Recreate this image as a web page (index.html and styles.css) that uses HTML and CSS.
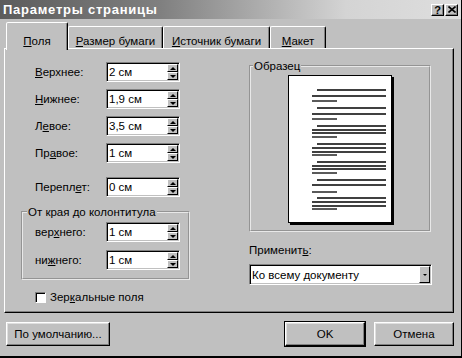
FILE: index.html
```html
<!DOCTYPE html>
<html lang="ru">
<head>
<meta charset="utf-8">
<title>Параметры страницы</title>
<link rel="stylesheet" href="styles.css">
</head>
<body>
<div class="dialog">

    <div class="titlebar">
        <span class="title">Параметры страницы</span>
        <div class="title-buttons">
            <span class="title-btn">?</span>
            <span class="title-btn">
                <svg width="8" height="7" viewBox="0 0 8 7"><path d="M0.5 0.5 L7.5 6.5 M7.5 0.5 L0.5 6.5" stroke="#000" stroke-width="1.6"/></svg>
            </span>
        </div>
    </div>

    <div class="tabs">
        <div class="tab active"><u>П</u>оля</div>
        <div class="tab tab-size"><u>Р</u>азмер бумаги</div>
        <div class="tab tab-source"><u>И</u>сточник бумаги</div>
        <div class="tab tab-layout"><u>М</u>акет</div>
    </div>

    <div class="panel">
        <div class="col-left">
            <div class="field-row">
                <label><u>В</u>ерхнее:</label>
                <div class="spin"><span class="spin-value">2 см</span><span class="spin-buttons"><span class="spin-btn up"></span><span class="spin-btn down"></span></span></div>
            </div>
            <div class="field-row">
                <label><u>Н</u>ижнее:</label>
                <div class="spin"><span class="spin-value">1,9 см</span><span class="spin-buttons"><span class="spin-btn up"></span><span class="spin-btn down"></span></span></div>
            </div>
            <div class="field-row">
                <label>Л<u>е</u>вое:</label>
                <div class="spin"><span class="spin-value">3,5 см</span><span class="spin-buttons"><span class="spin-btn up"></span><span class="spin-btn down"></span></span></div>
            </div>
            <div class="field-row">
                <label>Пр<u>а</u>вое:</label>
                <div class="spin"><span class="spin-value">1 см</span><span class="spin-buttons"><span class="spin-btn up"></span><span class="spin-btn down"></span></span></div>
            </div>
            <div class="field-row spaced">
                <label>Перепл<u>е</u>т:</label>
                <div class="spin"><span class="spin-value">0 см</span><span class="spin-buttons"><span class="spin-btn up"></span><span class="spin-btn down"></span></span></div>
            </div>

            <fieldset class="group">
                <legend>От края до колонтитула</legend>
                <div class="field-row">
                    <label>вер<u>х</u>него:</label>
                    <div class="spin"><span class="spin-value">1 см</span><span class="spin-buttons"><span class="spin-btn up"></span><span class="spin-btn down"></span></span></div>
                </div>
                <div class="field-row">
                    <label>ни<u>ж</u>него:</label>
                    <div class="spin"><span class="spin-value">1 см</span><span class="spin-buttons"><span class="spin-btn up"></span><span class="spin-btn down"></span></span></div>
                </div>
            </fieldset>

            <div class="check-row">
                <span class="checkbox"></span>
                <span>Зер<u>к</u>альные поля</span>
            </div>
        </div>

        <div class="col-right">
            <fieldset class="sample">
                <legend>Образец</legend>
                <div class="page">
                    <svg width="102" height="146" viewBox="0 0 102 146">
                        <g stroke="#000" stroke-width="1.3">
                            <line x1="28" y1="14" x2="97" y2="14"/>
                            <line x1="23" y1="20" x2="97" y2="20"/>
                            <line x1="23" y1="25" x2="48" y2="25"/>

                            <line x1="28" y1="32" x2="97" y2="32"/>
                            <line x1="23" y1="38" x2="97" y2="38"/>
                            <line x1="23" y1="43" x2="48" y2="43"/>

                            <line x1="28" y1="50" x2="97" y2="50"/>
                            <line x1="23" y1="54" x2="97" y2="54"/>
                            <line x1="23" y1="57" x2="97" y2="57"/>
                            <line x1="23" y1="61" x2="48" y2="61"/>

                            <line x1="28" y1="68" x2="97" y2="68"/>
                            <line x1="23" y1="72" x2="97" y2="72"/>
                            <line x1="23" y1="76" x2="97" y2="76"/>
                            <line x1="23" y1="79" x2="48" y2="79"/>

                            <line x1="28" y1="86" x2="97" y2="86"/>
                            <line x1="23" y1="90" x2="97" y2="90"/>
                            <line x1="23" y1="93" x2="97" y2="93"/>
                            <line x1="23" y1="97" x2="48" y2="97"/>

                            <line x1="28" y1="104" x2="97" y2="104"/>
                            <line x1="23" y1="109" x2="97" y2="109"/>
                            <line x1="23" y1="116" x2="48" y2="116"/>

                            <line x1="28" y1="122" x2="97" y2="122"/>
                            <line x1="23" y1="126" x2="97" y2="126"/>
                            <line x1="23" y1="130" x2="97" y2="130"/>
                            <line x1="23" y1="133" x2="48" y2="133"/>
                        </g>
                    </svg>
                </div>
            </fieldset>

            <div class="apply-label">Применит<u>ь</u>:</div>
            <div class="select">
                <span class="select-value">Ко всему документу</span>
                <span class="select-btn"></span>
            </div>
        </div>
    </div>

    <div class="footer">
        <button class="btn btn-default">По умолчанию...</button>
        <button class="btn btn-ok">OK</button>
        <button class="btn btn-cancel">Отмена</button>
    </div>

</div>
</body>
</html>
```

FILE: styles.css
```css
* {
    box-sizing: border-box;
}

body {
    margin: 0;
    background: #c0c0c0;
    font-family: "Liberation Sans", Arial, sans-serif;
    font-size: 11.5px;
    line-height: 14px;
    color: #000;
}

u {
    text-decoration-thickness: 1px;
}

.dialog {
    width: 462px;
    height: 358px;
    background: #c0c0c0;
    border-right: 1px solid #000;
    border-bottom: 2px solid #000;
    display: flex;
    flex-direction: column;
}

/* title bar */
.titlebar {
    height: 19px;
    display: flex;
    align-items: center;
    justify-content: space-between;
    padding: 0 3px 0 3px;
    background: linear-gradient(to right, #5c5c5c 0%, #808080 35%, #d4d4d4 75%, #dedede 100%);
}

.title {
    color: #fff;
    font-weight: bold;
    font-size: 13px;
    letter-spacing: 0.75px;
}

.title-buttons {
    display: flex;
    gap: 1px;
}

.title-btn {
    width: 13px;
    height: 12px;
    display: flex;
    align-items: center;
    justify-content: center;
    background: #c0c0c0;
    border: 1px solid;
    border-color: #fff #000 #000 #fff;
    box-shadow: inset -1px -1px 0 #808080;
    font-weight: bold;
    font-size: 11px;
    line-height: 10px;
}

/* tabs */
.tabs {
    height: 29px;
    display: flex;
    align-items: flex-end;
    padding-left: 6px;
}

.tab {
    height: 22px;
    padding-top: 7px;
    text-align: center;
    border: 1px solid;
    border-bottom: 0;
    border-color: #fff #000 transparent #fff;
    box-shadow: inset -1px 0 0 #808080;
    border-radius: 2px 2px 0 0;
}

.tab.active {
    width: 62px;
    height: 28px;
    padding-top: 11px;
    margin-bottom: -2px;
    background: #c0c0c0;
    position: relative;
    z-index: 1;
}

.tab-size {
    width: 95px;
}

.tab-source {
    width: 107px;
}

.tab-layout {
    width: 56px;
}

/* panel */
.panel {
    width: 450px;
    height: 265px;
    margin-left: 4px;
    display: flex;
    border: 1px solid;
    border-color: #fff #000 #000 #fff;
    box-shadow: inset -1px -1px 0 #808080;
}

.col-left {
    width: 244px;
    padding-top: 13px;
}

.col-right {
    width: 184px;
    padding-top: 10px;
}

.field-row {
    height: 20px;
    display: flex;
    align-items: center;
    padding-left: 30px;
}

.field-row + .field-row {
    margin-top: 7px;
}

.field-row.spaced {
    margin-top: 14px;
}

.field-row label {
    width: 71px;
}

.spin {
    width: 74px;
    height: 20px;
    display: flex;
    background: #fff;
    border: 1px solid;
    border-color: #808080 #fff #fff #808080;
    box-shadow: inset 1px 1px 0 #000, inset -1px -1px 0 #c0c0c0;
}

.spin-value {
    flex: 1;
    padding: 2px 0 0 2px;
}

.spin-buttons {
    width: 12px;
    display: flex;
    flex-direction: column;
    padding: 1px 1px 1px 0;
}

.spin-btn {
    flex: 1;
    display: flex;
    align-items: center;
    justify-content: center;
    background: #c0c0c0;
    border: 1px solid;
    border-color: #fff #000 #000 #fff;
}

.spin-btn::after {
    content: "";
    border-left: 3px solid transparent;
    border-right: 3px solid transparent;
}

.spin-btn.up::after {
    border-bottom: 3px solid #000;
}

.spin-btn.down::after {
    border-top: 3px solid #000;
}

/* group boxes */
fieldset {
    margin: 0;
    border: 2px groove #e8e8e8;
}

legend {
    padding: 0 1px;
}

.group {
    width: 169px;
    margin: 8px 0 0 16px;
    padding: 3px 0 8px 12px;
}

.group legend {
    margin-left: -8px;
}

.group .field-row {
    padding-left: 0;
}

.group .field-row + .field-row {
    margin-top: 8px;
}

.check-row {
    display: flex;
    align-items: center;
    gap: 4px;
    margin-top: 10px;
    padding-left: 30px;
}

.checkbox {
    width: 11px;
    height: 11px;
    background: #fff;
    border: 1px solid;
    border-color: #808080 #fff #fff #808080;
    box-shadow: inset 1px 1px 0 #000;
}

.sample {
    width: 182px;
    padding: 2px 0 7px 0;
}

.sample legend {
    margin-left: 2px;
}

.page {
    width: 104px;
    height: 148px;
    margin: 0 auto;
    background: #fff;
    border: 1px solid #000;
    box-shadow: 2px 2px 0 #000;
}

.page svg {
    display: block;
}

.apply-label {
    margin-top: 11px;
}

.select {
    width: 183px;
    height: 21px;
    margin-top: 7px;
    display: flex;
    background: #fff;
    border: 1px solid;
    border-color: #808080 #fff #fff #808080;
    box-shadow: inset 1px 1px 0 #000, inset -1px -1px 0 #c0c0c0;
}

.select-value {
    flex: 1;
    padding: 3px 0 0 2px;
}

.select-btn {
    width: 11px;
    margin: 1px 1px 1px 0;
    display: flex;
    align-items: center;
    justify-content: center;
    background: #c0c0c0;
    border: 1px solid;
    border-color: #fff #000 #000 #fff;
}

.select-btn::after {
    content: "";
    border-left: 2px solid transparent;
    border-right: 2px solid transparent;
    border-top: 2px solid #000;
}

/* buttons */
.footer {
    display: flex;
    padding: 9px 7px 0 6px;
}

.btn {
    height: 24px;
    padding: 0;
    font: inherit;
    color: #000;
    background: #c0c0c0;
    border: 1px solid;
    border-color: #fff #000 #000 #fff;
    box-shadow: inset -1px -1px 0 #808080, inset 1px 1px 0 #dfdfdf;
}

.btn-default {
    width: 104px;
}

.btn-ok {
    width: 80px;
    margin-left: auto;
    box-shadow: 0 0 0 1px #000, inset -1px -1px 0 #808080, inset 1px 1px 0 #dfdfdf;
}

.btn-cancel {
    width: 80px;
    margin-left: 9px;
}
```
